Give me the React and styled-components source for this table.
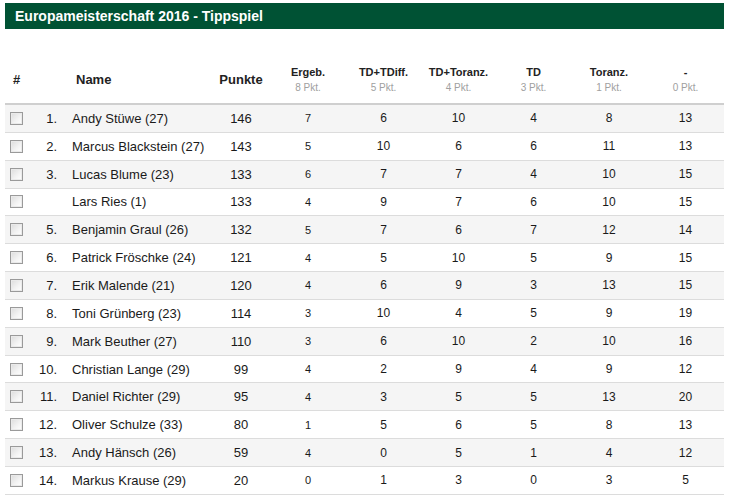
import React from "react";
import styled, { createGlobalStyle } from "styled-components";

const GlobalStyle = createGlobalStyle`
  body {
    margin: 0;
    background: #ffffff;
    font-family: "Liberation Sans", Arial, sans-serif;
    color: #222;
  }
`;

const Page = styled.div`
  padding: 3px 5px 0 5px;
  width: 719px;
`;

const TitleBar = styled.div`
  background: #005234;
  color: #ffffff;
  font-weight: bold;
  font-size: 14px;
  height: 26px;
  line-height: 27px;
  padding-left: 10px;
`;

const Table = styled.table`
  margin-top: 28px;
  width: 719px;
  border-collapse: collapse;
  table-layout: fixed;
`;

const HeadCell = styled.th`
  height: 46px;
  padding: 0;
  font-size: ${(p) => (p.$small ? "11px" : "13px")};
  font-weight: bold;
  color: #222;
  text-align: ${(p) => p.$align || "center"};
  padding-left: ${(p) => p.$indent || 0}px;
  border-bottom: 2px solid #cfcfcf;
  vertical-align: middle;
  line-height: 16px;
`;

const Sub = styled.div`
  font-size: 10px;
  font-weight: normal;
  color: #a0a0a0;
  line-height: 16px;
`;

const Row = styled.tr`
  background: ${(p) => (p.$odd ? "#f5f5f5" : "#ffffff")};
  border-bottom: 1px solid #dcdcdc;
`;

const Cell = styled.td`
  height: 26.85px;
  padding: 0;
  font-size: ${(p) => p.$size || 12}px;
  text-align: ${(p) => p.$align || "center"};
  padding-left: ${(p) => p.$indent || 0}px;
  padding-right: ${(p) => p.$right || 0}px;
  color: #1a1a1a;
  white-space: nowrap;
`;

const Check = styled.span`
  display: block;
  width: 11px;
  height: 11px;
  margin-left: 5px;
  border: 1px solid #9a9a9a;
  background: linear-gradient(135deg, #dcdcdc 0%, #f4f4f4 60%, #ffffff 100%);
  box-shadow: inset 0 0 0 1px #eaeaea;
`;

const cols = [
  { label: "Ergeb.", pts: "8 Pkt.", w: 76 },
  { label: "TD+TDiff.", pts: "5 Pkt.", w: 75 },
  { label: "TD+Toranz.", pts: "4 Pkt.", w: 75 },
  { label: "TD", pts: "3 Pkt.", w: 75 },
  { label: "Toranz.", pts: "1 Pkt.", w: 76 },
  { label: "-", pts: "0 Pkt.", w: 77 },
];

const players = [
  ["1.", "Andy Stüwe (27)", 146, [7, 6, 10, 4, 8, 13]],
  ["2.", "Marcus Blackstein (27)", 143, [5, 10, 6, 6, 11, 13]],
  ["3.", "Lucas Blume (23)", 133, [6, 7, 7, 4, 10, 15]],
  ["", "Lars Ries (1)", 133, [4, 9, 7, 6, 10, 15]],
  ["5.", "Benjamin Graul (26)", 132, [5, 7, 6, 7, 12, 14]],
  ["6.", "Patrick Fröschke (24)", 121, [4, 5, 10, 5, 9, 15]],
  ["7.", "Erik Malende (21)", 120, [4, 6, 9, 3, 13, 15]],
  ["8.", "Toni Grünberg (23)", 114, [3, 10, 4, 5, 9, 19]],
  ["9.", "Mark Beuther (27)", 110, [3, 6, 10, 2, 10, 16]],
  ["10.", "Christian Lange (29)", 99, [4, 2, 9, 4, 9, 12]],
  ["11.", "Daniel Richter (29)", 95, [4, 3, 5, 5, 13, 20]],
  ["12.", "Oliver Schulze (33)", 80, [1, 5, 6, 5, 8, 13]],
  ["13.", "Andy Hänsch (26)", 59, [4, 0, 5, 1, 4, 12]],
  ["14.", "Markus Krause (29)", 20, [0, 1, 3, 0, 3, 5]],
];

const App = () => {
  return (
    <Page>
      <GlobalStyle />
      <TitleBar>Europameisterschaft 2016 - Tippspiel</TitleBar>
      <Table>
        <colgroup>
          <col style={{ width: 23 }} />
          <col style={{ width: 36 }} />
          <col style={{ width: 148 }} />
          <col style={{ width: 58 }} />
          {cols.map((c) => (
            <col key={c.label} style={{ width: c.w }} />
          ))}
        </colgroup>
        <thead>
          <tr>
            <HeadCell>#</HeadCell>
            <HeadCell />
            <HeadCell $align="left" $indent={12}>
              Name
            </HeadCell>
            <HeadCell>Punkte</HeadCell>
            {cols.map((c) => (
              <HeadCell key={c.label} $small>
                {c.label}
                <Sub>{c.pts}</Sub>
              </HeadCell>
            ))}
          </tr>
        </thead>
        <tbody>
          {players.map(([rank, name, points, stats], i) => (
            <Row key={name} $odd={i % 2 === 0}>
              <Cell>
                <Check />
              </Cell>
              <Cell $align="right" $right={7} $size={13}>
                {rank}
              </Cell>
              <Cell $align="left" $indent={8} $size={13}>
                {name}
              </Cell>
              <Cell $size={13}>{points}</Cell>
              {stats.map((s, j) => (
                <Cell key={j} $size={j === 0 ? 11 : 12}>
                  {s}
                </Cell>
              ))}
            </Row>
          ))}
        </tbody>
      </Table>
    </Page>
  );
};

export default App;
